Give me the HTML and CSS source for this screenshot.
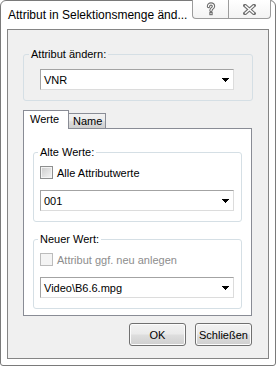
FILE: index.html
```html
<!DOCTYPE html>
<html lang="de">

<head>
    <meta charset="UTF-8">
    <title>Attribut in Selektionsmenge ändern</title>
    <link rel="stylesheet" href="styles.css">
</head>

<body>

    <div class="window">
        <!-- title bar with help and close buttons -->
        <div class="titlebar">
            <span class="title">Attribut in Selektionsmenge änd...</span>
            <div class="caption-buttons">
                <span class="cap-btn help">
                    <svg width="12" height="14" viewBox="0 0 12 14">
                        <path d="M3.5 4.5 Q3.5 2 6 2 Q8.5 2 8.5 4.3 Q8.5 5.6 7 6.5 Q6 7.1 6 8.5" fill="none" stroke="#707070" stroke-width="3.4" stroke-linecap="round" />
                        <rect x="4.3" y="10" width="3.4" height="3.2" fill="#707070" />
                        <path d="M3.5 4.5 Q3.5 2 6 2 Q8.5 2 8.5 4.3 Q8.5 5.6 7 6.5 Q6 7.1 6 8.5" fill="none" stroke="#fff" stroke-width="1.2" stroke-linecap="round" />
                        <rect x="5.4" y="11.1" width="1.2" height="1" fill="#fff" />
                    </svg>
                </span>
                <span class="cap-btn close">
                    <svg width="13" height="11" viewBox="0 0 13 11">
                        <path d="M2 1.5 L11 9.5 M11 1.5 L2 9.5" stroke="#707070" stroke-width="3.6" stroke-linecap="square" />
                        <path d="M2 1.5 L11 9.5 M11 1.5 L2 9.5" stroke="#fff" stroke-width="1.4" stroke-linecap="butt" />
                    </svg>
                </span>
            </div>
        </div>

        <div class="client">
            <fieldset class="group top-group">
                <legend>Attribut ändern:</legend>
                <div class="combo"><span>VNR</span><svg class="arrow" width="7" height="4" viewBox="0 0 7 4"><path d="M0 0h7v1h-1v1h-1v1h-1v1h-1v-1h-1v-1h-1v-1h-1z" fill="#000" shape-rendering="crispEdges" /></svg></div>
            </fieldset>

            <div class="tabs">
                <span class="tab active">Werte</span>
                <span class="tab">Name</span>
            </div>

            <div class="tab-panel">
                <fieldset class="group">
                    <legend>Alte Werte:</legend>
                    <label class="check"><span class="box"></span>Alle Attributwerte</label>
                    <div class="combo"><span>001</span><svg class="arrow" width="7" height="4" viewBox="0 0 7 4"><path d="M0 0h7v1h-1v1h-1v1h-1v1h-1v-1h-1v-1h-1v-1h-1z" fill="#000" shape-rendering="crispEdges" /></svg></div>
                </fieldset>

                <fieldset class="group">
                    <legend>Neuer Wert:</legend>
                    <label class="check disabled"><span class="box"></span>Attribut ggf. neu anlegen</label>
                    <div class="combo"><span>Video\B6.6.mpg</span><svg class="arrow" width="7" height="4" viewBox="0 0 7 4"><path d="M0 0h7v1h-1v1h-1v1h-1v1h-1v-1h-1v-1h-1v-1h-1z" fill="#000" shape-rendering="crispEdges" /></svg></div>
                </fieldset>
            </div>

            <div class="actions">
                <button>OK</button>
                <button>Schließen</button>
            </div>
        </div>
    </div>

</body>

</html>
```

FILE: styles.css
```css
body {
    margin: 0;
    padding: 0;
    background-color: #ffffff;
    font-family: "Liberation Sans", Arial, sans-serif;
    font-size: 11px;
    color: #000;
}

.window {
    width: 276px;
    height: 366px;
    box-sizing: border-box;
    border: 1px solid #7a7a7a;
    border-radius: 6px 6px 3px 3px;
    background-color: #ffffff;
}

.titlebar {
    height: 28px;
    display: flex;
    justify-content: space-between;
    align-items: flex-start;
}

.title {
    font-size: 12px;
    margin: 7px 0 0 7px;
    white-space: nowrap;
}

.caption-buttons {
    display: flex;
    margin: -1px 4px 0 0;
}

.cap-btn {
    height: 19px;
    box-sizing: border-box;
    border: 1px solid #9c9c9c;
    border-top: none;
    background: linear-gradient(#ffffff, #f3f3f3);
    display: flex;
    align-items: center;
    justify-content: center;
}

.cap-btn.help {
    width: 36px;
    border-radius: 0 0 0 4px;
    border-right: none;
}

.cap-btn.close {
    width: 43px;
    border-radius: 0 0 4px 0;
}

.cap-btn svg {
    display: block;
}

.client {
    height: 330px;
    box-sizing: border-box;
    margin: 0 6px;
    border: 1px solid #858585;
    background-color: #f0f0f0;
    padding: 0 15px;
}

/* group boxes */
.group {
    margin: 0;
    padding: 0 0 10px 6px;
    border: 1px solid #d5dfe5;
    border-radius: 3px;
    min-width: 0;
}

.group legend {
    padding: 0 2px;
    margin-left: -2px;
    line-height: 13px;
}

.top-group {
    margin-top: 18px;
    padding-left: 16px;
}

.top-group legend {
    margin-left: -11px;
}

.top-group .combo {
    margin-top: 8px;
}

.combo {
    width: 194px;
    height: 21px;
    box-sizing: border-box;
    border: 1px solid;
    border-color: #a3a3a3 #dcdcdc #dcdcdc #a3a3a3;
    background-color: #fff;
    display: flex;
    align-items: center;
    justify-content: space-between;
    padding: 0 4px 0 3px;
}

.arrow {
    display: block;
}

/* tabs */
.tabs {
    display: flex;
    align-items: flex-end;
    height: 19px;
    margin-top: 9px;
    margin-bottom: -1px;
    position: relative;
    z-index: 1;
}

.tab {
    box-sizing: border-box;
    height: 16px;
    line-height: 14px;
    border: 1px solid #898c95;
    padding: 0 4px;
    background: linear-gradient(#f2f2f2, #ebebeb 45%, #dddddd 55%, #cfcfcf);
}

.tab.active {
    height: 19px;
    width: 46px;
    line-height: 17px;
    padding: 0 6px;
    border-bottom: none;
    background: #fff;
    position: relative;
    z-index: 1;
}

.tab:not(.active) {
    width: 38px;
    margin-left: -1px;
}

.tab-panel {
    width: 229px;
    height: 188px;
    box-sizing: border-box;
    border: 1px solid #898c95;
    background-color: #fff;
    padding: 0 9px;
}

.tab-panel .group {
    margin-top: 11px;
}

.tab-panel .group:first-child {
    margin-top: 17px;
}

.check {
    display: flex;
    align-items: center;
    gap: 4px;
    height: 13px;
    margin-top: 7px;
    margin-bottom: 11px;
}

.box {
    width: 13px;
    height: 13px;
    box-sizing: border-box;
    border: 1px solid #8e8f8f;
    box-shadow: inset 0 0 0 1px #f4f4f4;
    background: linear-gradient(135deg, #cbcbcb, #f6f6f6);
}

.check.disabled {
    color: #8d8d8d;
}

.check.disabled .box {
    border-color: #bcbcbc;
    background: #f4f4f4;
}

/* dialog buttons */
.actions {
    display: flex;
    justify-content: flex-end;
    gap: 9px;
    margin: 7px 1px 0 0;
}

button {
    width: 57px;
    height: 23px;
    padding: 0;
    font-family: "Liberation Sans", Arial, sans-serif;
    font-size: 11px;
    color: #000;
    border: 1px solid #707070;
    border-radius: 3px;
    background: linear-gradient(#f2f2f2, #ebebeb 45%, #dddddd 55%, #cfcfcf);
    box-shadow: inset 0 0 0 1px #fcfcfc;
}
```
